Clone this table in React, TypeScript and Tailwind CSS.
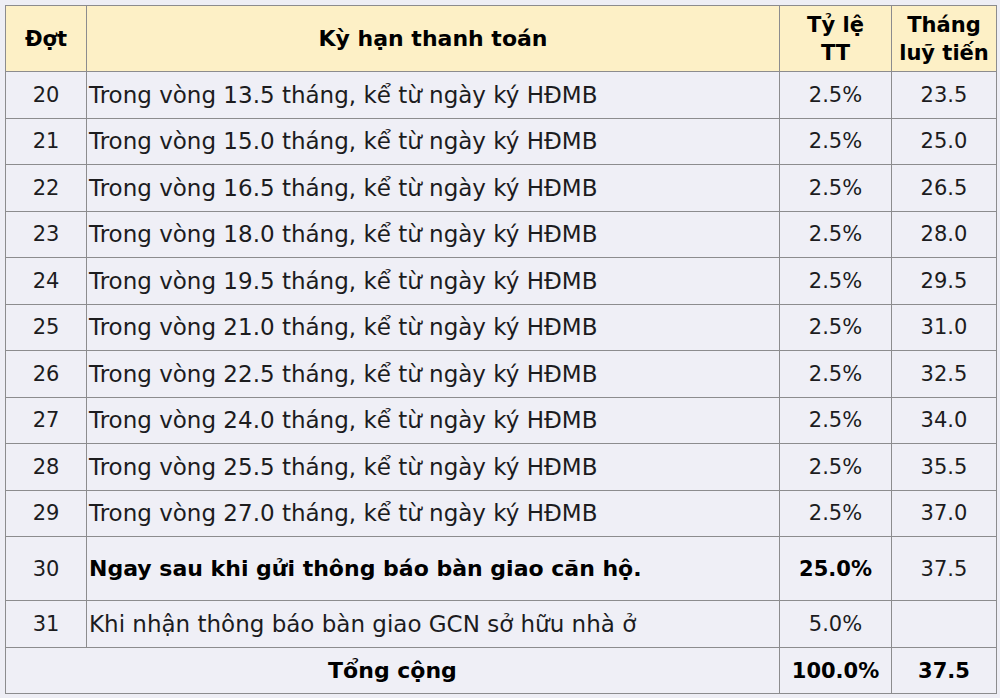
import React from "react";

const rows = [
  { no: 20, term: "13.5", pct: "2.5%", month: "23.5" },
  { no: 21, term: "15.0", pct: "2.5%", month: "25.0" },
  { no: 22, term: "16.5", pct: "2.5%", month: "26.5" },
  { no: 23, term: "18.0", pct: "2.5%", month: "28.0" },
  { no: 24, term: "19.5", pct: "2.5%", month: "29.5" },
  { no: 25, term: "21.0", pct: "2.5%", month: "31.0" },
  { no: 26, term: "22.5", pct: "2.5%", month: "32.5" },
  { no: 27, term: "24.0", pct: "2.5%", month: "34.0" },
  { no: 28, term: "25.5", pct: "2.5%", month: "35.5" },
  { no: 29, term: "27.0", pct: "2.5%", month: "37.0" },
];

const cell = "border border-[#8c8c8e] p-0";

export default function App() {
  return (
    <div
      className="w-[1000px] h-[698px] bg-[#eeeef5] pt-[5px] pl-[5px] text-[#1c1c1e]"
      style={{ fontFamily: '"DejaVu Sans", sans-serif' }}
    >
      <table className="border-collapse table-fixed w-[991px] text-[21px] leading-[28px]">
        <colgroup>
          <col className="w-[81px]" />
          <col className="w-[693px]" />
          <col className="w-[112px]" />
          <col className="w-[105px]" />
        </colgroup>
        <thead>
          <tr className="h-[66px] bg-[#fdf0c6] font-bold text-black">
            <th className={cell}>Đợt</th>
            <th className={`${cell} text-[22px]`}>Kỳ hạn thanh toán</th>
            <th className={cell}>
              Tỷ lệ
              <br />
              TT
            </th>
            <th className={cell}>
              Tháng
              <br />
              luỹ tiến
            </th>
          </tr>
        </thead>
        <tbody className="bg-[#efeff6]">
          {rows.map((r) => (
            <tr key={r.no} className="h-[46.5px]">
              <td className={`${cell} text-center`}>{r.no}</td>
              <td className={`${cell} pl-[2px] text-[23px] whitespace-nowrap`}>
                Trong vòng {r.term} tháng, kể từ ngày ký HĐMB
              </td>
              <td className={`${cell} text-center`}>{r.pct}</td>
              <td className={`${cell} text-center`}>{r.month}</td>
            </tr>
          ))}
          <tr className="h-[64px]">
            <td className={`${cell} text-center`}>30</td>
            <td className={`${cell} pl-[2px] text-[22px] font-bold text-black whitespace-nowrap`}>
              Ngay sau khi gửi thông báo bàn giao căn hộ.
            </td>
            <td className={`${cell} text-center font-bold text-black`}>25.0%</td>
            <td className={`${cell} text-center`}>37.5</td>
          </tr>
          <tr className="h-[47px]">
            <td className={`${cell} text-center`}>31</td>
            <td className={`${cell} pl-[2px] text-[23px] whitespace-nowrap`}>
              Khi nhận thông báo bàn giao GCN sở hữu nhà ở
            </td>
            <td className={`${cell} text-center`}>5.0%</td>
            <td className={cell}></td>
          </tr>
          <tr className="h-[46px] font-bold text-black">
            <td colSpan={2} className={`${cell} text-center text-[22px]`}>
              Tổng cộng
            </td>
            <td className={`${cell} text-center`}>100.0%</td>
            <td className={`${cell} text-center`}>37.5</td>
          </tr>
        </tbody>
      </table>
    </div>
  );
}
